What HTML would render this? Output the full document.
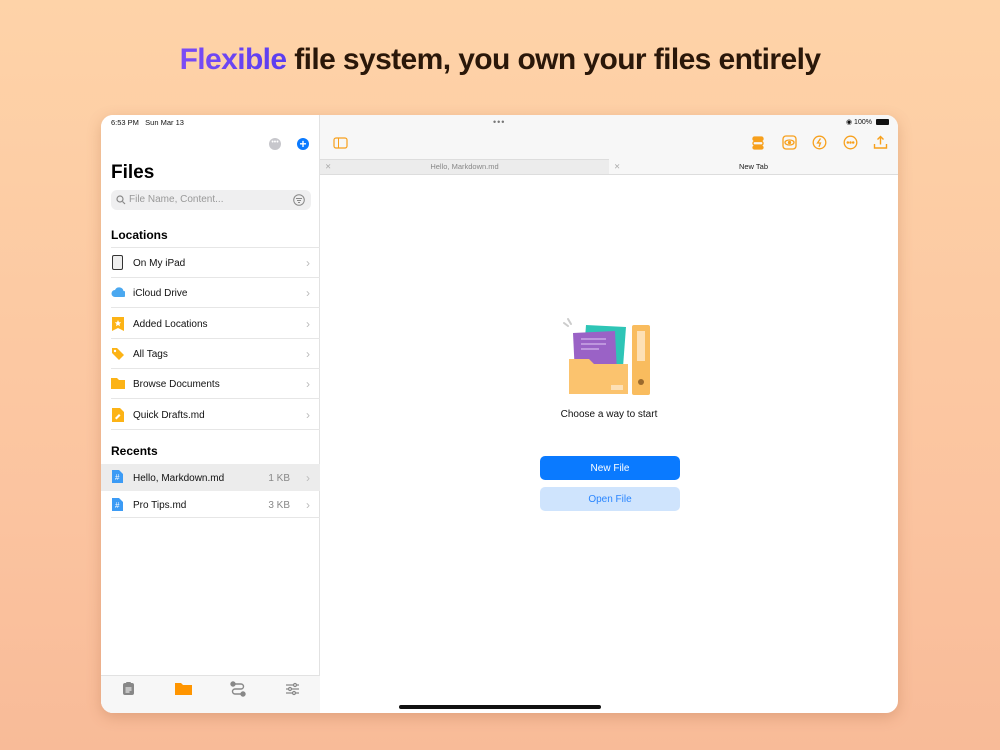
<!DOCTYPE html>
<html><head><meta charset="utf-8"><style>
*{margin:0;padding:0;box-sizing:border-box}
body{width:1000px;height:750px;overflow:hidden;background:linear-gradient(#fed3a8,#fbc39f 70%,#f8bb98);font-family:"Liberation Sans",sans-serif;position:relative}
.title{position:absolute;top:43px;left:0;width:1000px;text-align:center;font-size:30px;font-weight:bold;color:#2a1709;letter-spacing:-0.6px}
.title span{background:linear-gradient(90deg,#7b4cf5,#5a3df0);-webkit-background-clip:text;color:transparent}
.dev{position:absolute;left:101px;top:115px;width:797px;height:598px;border-radius:12px;background:#fff;overflow:hidden;box-shadow:0 4px 14px rgba(150,80,40,.25)}
.side{position:absolute;left:0;top:0;width:219px;height:598px;background:#fff;border-right:1px solid #e2e2e2}
.abs{position:absolute}
.row{position:absolute;left:10px;width:209px;height:30px;border-bottom:1px solid #e6e6e6;font-size:10px;color:#111}
.row .t{position:absolute;left:22px;top:10px}
.chev{position:absolute;right:10px;top:8px;color:#bbb;font-size:12px}
.chev.kb{font-size:10px;top:10px;right:30px;color:#888}
.ic{position:absolute;left:0;top:7px;width:14px;height:15px}
.btn{position:absolute;left:439px;width:140px;height:24px;border-radius:5px;font-size:10px;text-align:center;line-height:26px}
</style></head><body>
<div class="title"><span>Flexible</span> file system, you own your files entirely</div>
<div class="dev">
<div class="abs" style="left:219px;top:0;width:578px;height:44px;background:#f7f7f7"></div>
<div class="abs" style="left:219px;top:44px;width:289px;height:16px;background:#ececec;border-top:1px solid #ddd;border-bottom:1px solid #ddd;font-size:7.5px;color:#888;text-align:center;line-height:14px">Hello, Markdown.md<span class="abs" style="left:5px;top:0;color:#aaa">✕</span></div>
<div class="abs" style="left:508px;top:44px;width:289px;height:16px;background:#f7f7f7;border-bottom:1px solid #ddd;font-size:7.5px;color:#222;text-align:center;line-height:16px">New Tab<span class="abs" style="left:5px;top:0;color:#aaa">✕</span></div>
<div class="abs" style="left:392px;top:2px;font-size:9px;color:#777;letter-spacing:1px">•••</div>
<div class="abs" style="left:745px;top:3px;font-size:7px;color:#111">◉ 100%</div>
<div class="abs" style="left:775px;top:4px;width:13px;height:6px;background:#111;border-radius:1px"></div>
<svg class="abs" style="left:232px;top:22px" width="15" height="12"><rect x="1" y="1" width="13" height="10" rx="2" fill="none" stroke="#f7a01c" stroke-width="1.2"/><line x1="5.5" y1="1" x2="5.5" y2="11" stroke="#f7a01c"/></svg>
<svg class="abs" style="left:650px;top:21px" width="16" height="14" fill="none" stroke="#f7a01c" stroke-width="1.3"><rect x="2" y="1" width="10" height="3.5" rx="1.5" fill="#f7a01c"/><rect x="2" y="5.5" width="10" height="3.5" rx="1.5"/><rect x="2" y="10" width="10" height="3" rx="1.5" fill="#f7a01c"/></svg>
<svg class="abs" style="left:681px;top:20px" width="15" height="15" fill="none" stroke="#f7a01c" stroke-width="1.3"><rect x="1" y="1" width="13" height="13" rx="3"/><ellipse cx="7.5" cy="7.5" rx="4.5" ry="2.5"/><circle cx="7.5" cy="7.5" r="1" fill="#f7a01c"/></svg>
<svg class="abs" style="left:711px;top:20px" width="15" height="15" fill="none" stroke="#f7a01c" stroke-width="1.3"><circle cx="7.5" cy="7.5" r="6.3"/><path d="M8.5 3.5 5.5 8h3l-1.5 3.8" /></svg>
<svg class="abs" style="left:742px;top:20px" width="15" height="15" fill="none" stroke="#f7a01c" stroke-width="1.3"><circle cx="7.5" cy="7.5" r="6.3"/><circle cx="4.8" cy="7.5" r=".6" fill="#f7a01c"/><circle cx="7.5" cy="7.5" r=".6" fill="#f7a01c"/><circle cx="10.2" cy="7.5" r=".6" fill="#f7a01c"/></svg>
<svg class="abs" style="left:772px;top:20px" width="15" height="15" fill="none" stroke="#f7a01c" stroke-width="1.4"><path d="M7.5 1.5v8M4.5 4.5l3-3 3 3M1.5 9v4h12V9"/></svg>
<svg class="abs" style="left:460px;top:200px" width="90" height="82">
<path d="M3 8l4 3M7 4l3 5" stroke="#ccc" stroke-width="2" stroke-linecap="round"/>
<path d="M25 10 L65 12 L62 52 L22 50Z" fill="#2ec5b6"/>
<path d="M12 18 L54 16 L56 58 L14 60Z" fill="#9a62c6"/>
<path d="M20 24h25M20 29h25M20 34h18" stroke="#c9a8e6" stroke-width="1.5"/>
<path d="M8 44 h20 l5 5 h34 v30 h-59z" fill="#fbc36e"/>
<rect x="50" y="70" width="12" height="5" fill="#fde0b5"/>
<rect x="71" y="10" width="18" height="70" rx="2" fill="#f9bc5e"/>
<rect x="76" y="16" width="8" height="30" fill="#fde0b5"/>
<circle cx="80" cy="67" r="3" fill="#9b6a2c"/>
</svg>
<div class="abs" style="left:418px;top:294px;width:180px;text-align:center;font-size:10px;color:#111">Choose a way to start</div>
<div class="btn" style="top:341px;background:#0a7aff;color:#fff">New File</div>
<div class="btn" style="top:372px;background:#cfe4fd;color:#2a86ff">Open File</div>
<div class="abs" style="left:298px;top:590px;width:202px;height:4px;border-radius:2px;background:#111"></div>
<div class="side">
<div class="abs" style="left:10px;top:3px;font-size:7.5px;color:#111">6:53 PM &nbsp; Sun Mar 13</div>
<div class="abs" style="left:168px;top:23px;width:12px;height:12px;border-radius:50%;background:#c7c7cc;color:#fff;font-size:7px;text-align:center;line-height:10px">•••</div>
<div class="abs" style="left:196px;top:23px;width:12px;height:12px;border-radius:50%;background:#0a7aff;color:#fff;font-size:12px;text-align:center;line-height:12px;font-weight:bold">+</div>
<div class="abs" style="left:10px;top:47px;font-size:19px;font-weight:bold;color:#000">Files</div>
<div class="abs" style="left:10px;top:75px;width:200px;height:20px;border-radius:6px;background:#efeff0;font-size:10px;color:#999;line-height:20px;padding-left:18px">File Name, Content...
<svg class="abs" style="left:5px;top:5px" width="10" height="10" fill="none" stroke="#888" stroke-width="1.2"><circle cx="4" cy="4" r="3"/><path d="M6.5 6.5 9 9"/></svg>
<svg class="abs" style="left:182px;top:4px" width="12" height="12" fill="none" stroke="#888" stroke-width="1"><circle cx="6" cy="6" r="5.3"/><path d="M3 4.5h6M4 6.5h4M5 8.5h2"/></svg></div>
<div class="abs" style="left:10px;top:113px;font-size:12px;font-weight:bold;color:#000">Locations</div>
<div class="abs" style="left:10px;top:132px;width:209px;border-top:1px solid #e6e6e6"></div>
<div class="row" style="top:133px"><div class="ic" style="left:1px;width:11px;height:15px;border:1.5px solid #333;border-radius:2px;background:#eee"></div><span class="t">On My iPad</span><span class="chev">›</span></div>
<div class="row" style="top:163px"><svg class="ic" width="16" height="15"><path d="M4 12a3.5 3.5 0 0 1 0-7 4.5 4.5 0 0 1 8.5 1 3 3 0 0 1 0 6z" fill="#4aa8f0"/></svg><span class="t">iCloud Drive</span><span class="chev">›</span></div>
<div class="row" style="top:194px"><svg class="ic" width="14" height="16"><path d="M1 1h12v14l-6-3-6 3z" fill="#fcb316"/><path d="M7 4l1 2.2 2.2.2-1.7 1.5.5 2.2L7 9 5 10.1l.5-2.2L3.8 6.4 6 6.2z" fill="#fff"/></svg><span class="t">Added Locations</span><span class="chev">›</span></div>
<div class="row" style="top:224px"><svg class="ic" width="15" height="15"><path d="M1 2v5l7 7 5-5-7-7z" fill="#fcb316"/><circle cx="4" cy="5" r="1.2" fill="#fff"/></svg><span class="t">All Tags</span><span class="chev">›</span></div>
<div class="row" style="top:254px"><svg class="ic" width="16" height="14"><path d="M0 2h6l2 2h8v9H0z" fill="#fcb316"/></svg><span class="t">Browse Documents</span><span class="chev">›</span></div>
<div class="row" style="top:285px"><svg class="ic" width="14" height="16"><path d="M1 1h8l4 4v10H1z" fill="#fcb316"/><path d="M4 11l4-4 1.5 1.5-4 4z" fill="#fff"/></svg><span class="t">Quick Drafts.md</span><span class="chev">›</span></div>
<div class="abs" style="left:10px;top:329px;font-size:12px;font-weight:bold;color:#000">Recents</div>
<div class="abs" style="left:0;top:349px;width:219px;height:27px;background:#ececec"></div>
<div class="row" style="top:348px;height:28px;border:none"><svg class="ic" width="13" height="15" style="top:6px"><path d="M1 1h7l4 4v9H1z" fill="#3c9bf5"/><text x="4" y="11" font-size="8" fill="#fff" font-family="Liberation Sans">#</text></svg><span class="t">Hello, Markdown.md</span><span class="chev kb">1 KB</span><span class="chev">›</span></div>
<div class="row" style="top:376px;height:27px"><svg class="ic" width="13" height="15" style="top:6px"><path d="M1 1h7l4 4v9H1z" fill="#3c9bf5"/><text x="4" y="11" font-size="8" fill="#fff" font-family="Liberation Sans">#</text></svg><span class="t" style="top:9px">Pro Tips.md</span><span class="chev kb" style="top:9px">3 KB</span><span class="chev" style="top:7px">›</span></div>
<div class="abs" style="left:0;top:560px;width:219px;height:38px;background:#f7f7f7;border-top:1px solid #e2e2e2"></div>
<svg class="abs" style="left:20px;top:566px" width="15" height="15"><rect x="2" y="2" width="11" height="12" rx="2" fill="#888"/><rect x="5" y="1" width="5" height="3" rx="1" fill="#888"/><path d="M4.5 7h6M4.5 9h6M4.5 11h4" stroke="#fff"/></svg>
<svg class="abs" style="left:74px;top:567px" width="17" height="13"><path d="M0 1h6l2 2h9v10H0z" fill="#ff9500"/></svg>
<svg class="abs" style="left:129px;top:566px" width="16" height="16" fill="none" stroke="#888" stroke-width="1.4"><circle cx="3" cy="3" r="2" fill="#888"/><circle cx="13" cy="13" r="2" fill="#888"/><path d="M5 3h6a2.5 2.5 0 0 1 0 5H5a2.5 2.5 0 0 0 0 5h6"/></svg>
<svg class="abs" style="left:184px;top:567px" width="15" height="14" stroke="#888" stroke-width="1.2"><path d="M1 3h13M1 7h13M1 11h13"/><circle cx="10" cy="3" r="1.5" fill="#f7f7f7"/><circle cx="5" cy="7" r="1.5" fill="#f7f7f7"/><circle cx="9" cy="11" r="1.5" fill="#f7f7f7"/></svg>
</div>
</div>
</body></html>
